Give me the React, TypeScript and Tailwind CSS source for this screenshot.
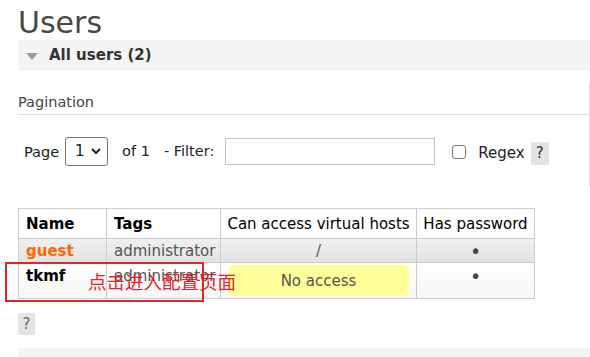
import React from "react";

export default function App() {
  const font = { fontFamily: '"DejaVu Sans", Verdana, sans-serif' };
  return (
    <div className="relative w-[590px] h-[357px] overflow-hidden bg-white text-[#222]" style={font}>
      <div className="pl-[18px]">
        {/* Title */}
        <div className="h-[40px] pt-[3px] text-[30px] leading-[40px] text-[#484848]">Users</div>

        {/* Section header bar */}
        <div className="h-[31px] bg-[#f5f5f5] flex items-center pl-[8px]">
          <svg width="12" height="7" viewBox="0 0 12 7" className="mt-[2px]">
            <polygon points="0,0 12,0 6,7" fill="#9a9a9a" />
          </svg>
          <span className="ml-[11px] text-[15px] font-bold text-[#333]">All users (2)</span>
        </div>

        {/* Pagination box */}
        <div className="mt-[11px] border-r border-[#dddddd]">
          <div className="pt-[12px] pb-[3px] border-b border-[#dddddd] text-[14.5px] leading-[17px] text-[#444]">
            Pagination
          </div>
          <div className="pt-[22px] pb-[20px] pl-[6px] flex items-center text-[14.5px] text-[#222]">
            <span className="mt-[3px]">Page</span>
            <div className="ml-[6px] w-[43px] h-[29px] border border-[#767676] rounded-[3px] flex items-center pl-[9px] pr-[6px] justify-between">
              <span className="text-[15px]">1</span>
              <svg width="10" height="7" viewBox="0 0 10 7">
                <polyline points="1,1 5,5 9,1" fill="none" stroke="#222" strokeWidth="2" />
              </svg>
            </div>
            <span className="ml-[14px] mt-[1px]">of 1</span>
            <span className="ml-[14px] mt-[1px]">- Filter:</span>
            <div className="ml-[11px] w-[210px] h-[27px] border border-[#c4c4c4]" />
            <div className="ml-[17px] w-[14px] h-[14px] border-[1.5px] border-[#767676] rounded-[3px]" />
            <span className="ml-[12px] mt-[4px] text-[15px]">Regex</span>
            <span className="ml-[6px] mt-[4px] w-[18px] h-[23px] bg-[#e4e4e4] flex items-center justify-center text-[15px] text-[#333]">?</span>
          </div>
        </div>

        {/* Table */}
        <table className="mt-[22px] border-collapse text-[15px]">
          <thead>
            <tr className="h-[30px] bg-white">
              <th className="w-[88px] border border-[#cccccc] text-left font-bold pl-[7px] pt-[2px] text-black">Name</th>
              <th className="w-[114px] border border-[#cccccc] text-left font-bold pl-[7px] pt-[2px] text-black">Tags</th>
              <th className="w-[196px] border border-[#cccccc] font-normal text-center pt-[2px] text-black">Can access virtual hosts</th>
              <th className="w-[118px] border border-[#cccccc] font-normal text-center pt-[2px] text-black">Has password</th>
            </tr>
          </thead>
          <tbody>
            <tr className="h-[24px] bg-gradient-to-b from-[#f0f0f0] to-[#e2e2e2]">
              <td className="border border-[#cccccc] pl-[7px] font-bold text-[#ff6600] leading-[20px]">guest</td>
              <td className="border border-[#cccccc] pl-[7px] text-[#555] leading-[20px]">administrator</td>
              <td className="border border-[#cccccc] text-center text-[#555] leading-[20px]">/</td>
              <td className="border border-[#cccccc] text-center text-[#444] leading-[20px] text-[19px]">•</td>
            </tr>
            <tr className="h-[36px] bg-gradient-to-b from-white to-[#f6f6f6]">
              <td className="border border-[#cccccc] pl-[7px] font-bold text-black align-top pt-[4px] leading-[18px]">tkmf</td>
              <td className="border border-[#cccccc] pl-[7px] text-[#555] align-top pt-[4px] leading-[18px]">administrator</td>
              <td className="border border-[#cccccc] align-top pt-[2px] px-[7px]">
                <div className="h-[31px] pt-[2px] rounded-[5px] bg-[#ffff99] flex items-center justify-center text-[#555]">No access</div>
              </td>
              <td className="border border-[#cccccc] text-center text-[#444] align-top pt-[4px] leading-[18px] text-[19px]">•</td>
            </tr>
          </tbody>
        </table>

        {/* help button */}
        <div className="mt-[14px] w-[17px] h-[22px] bg-[#e4e4e4] flex items-center justify-center text-[15px] text-[#666]">?</div>

        {/* next section bar */}
        <div className="mt-[13px] h-[20px] bg-[#f5f5f5]" />
      </div>

      {/* annotation overlay */}
      <div className="absolute left-[5px] top-[262px] w-[199px] h-[40px] border-2 border-[#e52228]" />
      <div
        className="absolute left-[88px] top-[269px] text-[18.5px] leading-[24px] text-[#e52228] whitespace-nowrap"
        style={{ fontFamily: '"Noto Sans CJK SC", sans-serif' }}
      >
        点击进入配置页面
      </div>
    </div>
  );
}
